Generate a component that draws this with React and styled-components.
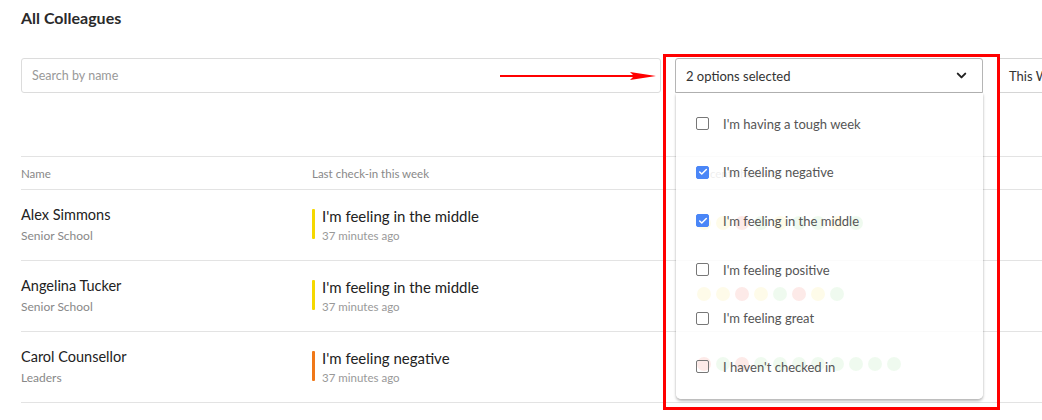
import React from "react";
import styled, { createGlobalStyle } from "styled-components";
import { ChevronDown, Check } from "lucide-react";

const Global = createGlobalStyle`
  html, body { margin: 0; padding: 0; overflow: hidden; background: #fff; }
  body { font-family: Lato, "Open Sans", sans-serif; color: #222; }
`;

const Page = styled.div`
  position: relative;
  width: 1042px;
  height: 420px;
  overflow: hidden;
  padding-left: 21px;
  box-sizing: border-box;
`;

const Title = styled.h1`
  margin: 0;
  padding-top: 8px;
  font-size: 16px;
  line-height: 20px;
  font-weight: 700;
  color: #2a2a2a;
`;

const Toolbar = styled.div`
  margin-top: 30px;
  display: flex;
  gap: 14px;
  width: 1300px;
`;

const Search = styled.input`
  flex: none;
  width: 640px;
  height: 35px;
  box-sizing: border-box;
  border: 1px solid #dcdcdc;
  border-radius: 3px;
  padding: 0 10px;
  font-family: inherit;
  font-size: 12.5px;
  color: #333;
  outline: none;
  &::placeholder { color: #999; }
`;

const SelectWrap = styled.div`
  position: relative;
  width: ${(p) => p.$w}px;
  flex: none;
`;

const SelectBox = styled.div`
  height: 35px;
  box-sizing: border-box;
  border: 1px solid ${(p) => (p.$open ? "#b5b5b5" : "#d5d5d5")};
  border-radius: ${(p) => (p.$open ? "3px 3px 0 0" : "3px")};
  display: flex;
  align-items: center;
  justify-content: space-between;
  padding: 0 13px 0 ${(p) => p.$pl}px;
  font-size: 13px;
  color: #333;
  background: #fff;
`;

const Panel = styled.div`
  position: absolute;
  top: 100%;
  left: 1px;
  right: 0;
  z-index: 5;
  background: rgba(255, 255, 255, 0.86);
  border-radius: 0 0 5px 5px;
  box-shadow: 0 2px 3px rgba(0, 0, 0, 0.28), 0 0 2px rgba(0, 0, 0, 0.08);
  padding: 6.5px 0 8px;
`;

const Option = styled.label`
  height: 48.6px;
  display: flex;
  align-items: center;
  padding-left: 20px;
  font-size: 13px;
  color: #555;
`;

const Box = styled.span`
  width: 13px;
  height: 13px;
  box-sizing: border-box;
  border-radius: 2px;
  border: 1px solid ${(p) => (p.$checked ? "#4a86f7" : "#777")};
  background: ${(p) => (p.$checked ? "#4a86f7" : "transparent")};
  display: flex;
  align-items: center;
  justify-content: center;
  margin-right: 14px;
  color: #fff;
`;

const Table = styled.div`
  margin-top: 63px;
  width: 1100px;
`;

const Grid = styled.div`
  display: grid;
  grid-template-columns: 291px 385px 1fr;
  border-bottom: 1px solid #e3e3e3;
  box-sizing: border-box;
`;

const HeadRow = styled(Grid)`
  height: 34px;
  border-top: 1px solid #e3e3e3;
  align-items: center;
  font-size: 11.5px;
  color: #888;
`;

const Row = styled(Grid)`
  height: 71px;
  padding-top: 16px;
  align-items: start;
`;

const Name = styled.div`
  font-size: 14.5px;
  line-height: 18px;
  color: #222;
`;

const Sub = styled.div`
  margin-top: 4px;
  font-size: 12px;
  line-height: 16px;
  color: #888;
`;

const CheckIn = styled.div`
  display: flex;
  margin-top: 1px;
`;

const Bar = styled.span`
  width: 3px;
  height: 30px;
  margin-top: 2px;
  background: ${(p) => p.$color};
  border-radius: 1px;
  flex: none;
`;

const CheckText = styled.div`
  margin-left: 7px;
`;

const Mood = styled.div`
  font-size: 15px;
  line-height: 18px;
  color: #222;
`;

const Ago = styled.div`
  margin-top: 4px;
  font-size: 11.5px;
  line-height: 14px;
  color: #999;
`;

const Dots = styled.div`
  display: flex;
  gap: 5px;
  margin-top: ${(p) => p.$mt}px;
`;

const Dot = styled.span`
  width: 14px;
  height: 14px;
  border-radius: 50%;
  background: ${(p) => p.$c};
`;

const RedBox = styled.div`
  position: absolute;
  left: 663px;
  top: 54px;
  width: 337px;
  height: 356px;
  box-sizing: border-box;
  border: 3px solid #f00;
  z-index: 10;
  pointer-events: none;
`;

const Arrow = styled.svg`
  position: absolute;
  left: 500px;
  top: 71px;
  z-index: 10;
`;

const C = { y: "#f6e265", r: "#f0695c", g: "#8fdc8f" };
const rows = [
  { name: "Alex Simmons", group: "Senior School", mood: "I'm feeling in the middle", color: "#f5d800", dots: "yyrgyggyg", mt: 10 },
  { name: "Angelina Tucker", group: "Senior School", mood: "I'm feeling in the middle", color: "#f5d800", dots: "yyrygryg", mt: 10 },
  { name: "Carol Counsellor", group: "Leaders", mood: "I'm feeling negative", color: "#f07818", dots: "rgrgggggggg", mt: 9 },
];

const options = [
  ["I'm having a tough week", false],
  ["I'm feeling negative", true],
  ["I'm feeling in the middle", true],
  ["I'm feeling positive", false],
  ["I'm feeling great", false],
  ["I haven't checked in", false],
];

export default function App() {
  return (
    <>
      <Global />
      <Page>
        <Title>All Colleagues</Title>
        <Toolbar>
          <Search placeholder="Search by name" />
          <SelectWrap $w={308}>
            <SelectBox $open $pl={10}>
              <span>2 options selected</span>
              <ChevronDown size={15} strokeWidth={3.2} color="#222" />
            </SelectBox>
            <Panel>
              {options.map(([label, checked]) => (
                <Option key={label}>
                  <Box $checked={checked}>
                    {checked && <Check size={10} strokeWidth={3.5} />}
                  </Box>
                  {label}
                </Option>
              ))}
            </Panel>
          </SelectWrap>
          <SelectWrap $w={200}>
            <SelectBox $pl={11}>
              <span>This Week</span>
            </SelectBox>
          </SelectWrap>
        </Toolbar>
        <Table>
          <HeadRow>
            <div>Name</div>
            <div>Last check-in this week</div>
            <div>Recent check-ins</div>
          </HeadRow>
          {rows.map((r) => (
            <Row key={r.name}>
              <div>
                <Name>{r.name}</Name>
                <Sub>{r.group}</Sub>
              </div>
              <CheckIn>
                <Bar $color={r.color} />
                <CheckText>
                  <Mood>{r.mood}</Mood>
                  <Ago>37 minutes ago</Ago>
                </CheckText>
              </CheckIn>
              <Dots $mt={r.mt}>
                {r.dots.split("").map((d, i) => (
                  <Dot key={i} $c={C[d]} />
                ))}
              </Dots>
            </Row>
          ))}
        </Table>
        <Arrow width="160" height="10" viewBox="0 0 160 10">
          <line x1="0" y1="5" x2="134" y2="5" stroke="#f00" strokeWidth="2" />
          <polygon points="130,1 156,5 130,9 134,5" fill="#f00" />
        </Arrow>
        <RedBox />
      </Page>
    </>
  );
}
